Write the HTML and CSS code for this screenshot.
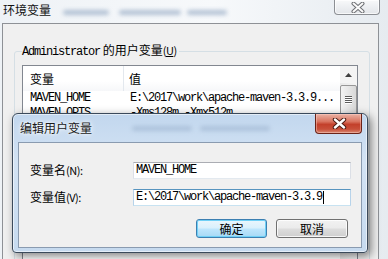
FILE: index.html
```html
<!DOCTYPE html>
<html lang="zh-CN">
<head>
<meta charset="utf-8">
<title>环境变量</title>
<link rel="stylesheet" href="styles.css">
</head>
<body>
<div class="win">
  <div class="titlebar">
    <span class="title">环境变量</span>
    <span class="ghost g1"></span>
    <span class="ghost g2"></span>
    <span class="ghost g3"></span>
    <div class="xgray">
      <svg width="14" height="11" viewBox="0 0 14 11"><path d="M2.5 1.5 L11.5 9.5 M11.5 1.5 L2.5 9.5" stroke="#6d6f73" stroke-width="4" stroke-linecap="round"/><path d="M2.5 1.5 L11.5 9.5 M11.5 1.5 L2.5 9.5" stroke="#fafafa" stroke-width="2" stroke-linecap="round"/></svg>
    </div>
  </div>
  <div class="frame">
    <fieldset class="group">
      <legend><span class="mono">Administrator</span> 的用户变量<span class="acc">(<u>U</u>)</span></legend>
      <div class="list">
        <div class="lv">
          <div class="hdr"><div class="hc">变量</div><div class="hc hc2">值</div></div>
          <div class="row"><div class="c1">MAVEN_HOME</div><div class="c2">E:\2017\work\apache-maven-3.3.9...</div></div>
          <div class="row"><div class="c1">MAVEN_OPTS</div><div class="c2">-Xms128m -Xmx512m</div></div>
        </div>
        <div class="sb">
          <div class="up"><svg width="7" height="4" viewBox="0 0 7 4"><path d="M0 4 L3.5 0 L7 4 Z" fill="#404040"/></svg></div>
          <div class="thumb"><span></span><span></span><span></span><span></span></div>
        </div>
      </div>
    </fieldset>
  </div>
</div>

<div class="dlg">
  <div class="dtitle">
    <span class="dt">编辑用户变量</span>
    <span class="ghost h1"></span>
    <span class="ghost h2"></span>
    <div class="xred">
      <svg width="15" height="11" viewBox="0 0 15 11"><path d="M3 1.5 L12 9.5 M12 1.5 L3 9.5" stroke="#4a1a12" stroke-width="4.4" stroke-linecap="round"/><path d="M3 1.5 L12 9.5 M12 1.5 L3 9.5" stroke="#ffffff" stroke-width="2.4" stroke-linecap="round"/></svg>
    </div>
  </div>
  <div class="dbody">
    <div class="field">
      <label class="lbl">变量名<span class="acc">(N):</span></label>
      <div class="inp"><span class="mono">MAVEN_HOME</span></div>
    </div>
    <div class="field">
      <label class="lbl">变量值<span class="acc">(V):</span></label>
      <div class="inp focus"><span class="mono">E:\2017\work\apache-maven-3.3.9</span><span class="caret"></span></div>
    </div>
    <div class="btns">
      <div class="btn def">确定</div>
      <div class="btn">取消</div>
    </div>
  </div>
</div>
</body>
</html>
```

FILE: styles.css
```css
* { box-sizing: border-box; }

body {
  margin: 0;
  width: 388px;
  height: 259px;
  overflow: hidden;
  position: relative;
  background: linear-gradient(90deg, #eef2f6 0%, #f7f9fb 55%, #e6ebf0 100%);
  font-family: "Noto Sans CJK SC", "DejaVu Sans", sans-serif;
  font-size: 12px;
  color: #000;
}

.mono {
  font-family: "Liberation Mono", "DejaVu Sans Mono", monospace;
  font-size: 12px;
  letter-spacing: -1.2px;
}

.acc {
  font-size: 11px;
  letter-spacing: -0.5px;
}

/* outer window */
.titlebar {
  height: 23px;
  display: flex;
  align-items: flex-start;
  padding: 0 8px 0 3px;
}

.title {
  line-height: 20px;
  font-size: 12px;
  color: #111;
}

.ghost {
  display: block;
  height: 5px;
  margin-top: 10px;
  background: #7d96b6;
  border-radius: 3px;
  filter: blur(2px);
  opacity: 0.55;
}

.g1 { width: 46px; margin-left: 12px; }
.g2 { width: 62px; margin-left: 10px; }
.g3 { width: 40px; margin-left: 6px; }

.xgray {
  margin-left: auto;
  width: 46px;
  height: 15px;
  border: 1px solid #8c8f94;
  border-top: none;
  border-radius: 0 0 4px 4px;
  background: linear-gradient(#f8f9fa, #e2e5e9);
  box-shadow: inset 0 0 0 1px rgba(255, 255, 255, 0.7);
  display: flex;
  align-items: center;
  justify-content: center;
  padding-left: 2px;
}

.frame {
  margin: 0 9px 0 2px;
  height: 240px;
  border: 1px solid #8e9196;
  background: #f0f0f0;
  padding: 0 8px 0 11px;
}

.group {
  margin: 19px 0 0;
  padding: 6px 11px 0 7px;
  border: 1px solid #d5dfe5;
  border-radius: 3px;
  height: 220px;
  min-width: 0;
}

.group legend {
  padding: 0 2px 0 0;
  line-height: 14px;
  font-size: 12px;
}

.list {
  border: 1px solid #828790;
  background: #fff;
  display: flex;
  height: 200px;
}

.lv { flex: 1; }

.hdr {
  display: grid;
  grid-template-columns: 101px 1fr;
  height: 25px;
  background: linear-gradient(#ffffff 60%, #f6f7f9);
}

.hc {
  padding-left: 7px;
  line-height: 25px;
  border-right: 1px solid #e3e8ee;
}

.hc2 {
  padding-left: 5px;
  border-right: none;
}

.row {
  display: grid;
  grid-template-columns: 101px 1fr;
  height: 15px;
  line-height: 15px;
  font-family: "Liberation Mono", "DejaVu Sans Mono", monospace;
  font-size: 12px;
  letter-spacing: -1.2px;
  white-space: nowrap;
}

.c1 { padding-left: 7px; }
.c2 { padding-left: 6px; overflow: hidden; }

.sb {
  width: 17px;
  background: linear-gradient(90deg, #e9e9e9, #f5f5f5);
  display: flex;
  flex-direction: column;
}

.sb .up {
  height: 17px;
  display: flex;
  align-items: center;
  justify-content: center;
  background: #f4f4f4;
}

.sb .thumb {
  margin: 2px 0 0;
  height: 70px;
  border: 1px solid #979797;
  border-radius: 2px;
  background: linear-gradient(90deg, #f3f3f3, #e6e6e6 50%, #d8d8d8);
  display: flex;
  flex-direction: column;
  align-items: center;
  padding-top: 10px;
  gap: 1px;
}

.sb .thumb span {
  width: 7px;
  height: 1px;
  background: #5c5c5c;
  box-shadow: 0 1px 0 #fff;
}

/* edit dialog (modal, over the window) */
.dlg {
  position: absolute;
  left: 12px;
  top: 113px;
  width: 356px;
  height: 140px;
  border: 1px solid #3b4a5b;
  border-radius: 6px 6px 4px 4px;
  background: linear-gradient(180deg, #c2d7ee 0%, #d3e3f4 35%, #c6daef 100%);
  box-shadow: 3px 3px 10px rgba(0, 0, 0, 0.5), inset 0 0 0 1px rgba(255, 255, 255, 0.55);
  display: flex;
  flex-direction: column;
  padding: 0 5px 4px;
}

.dtitle {
  height: 28px;
  display: flex;
  align-items: flex-start;
  padding-left: 2px;
}

.dt {
  line-height: 28px;
  font-size: 12px;
  color: #1a1a1a;
  text-shadow: 0 0 6px #fff, 0 0 3px #fff;
}

.h1 { width: 60px; margin-left: 40px; margin-top: 12px; opacity: 0.35; }
.h2 { width: 70px; margin-left: 8px; margin-top: 12px; opacity: 0.35; }

.xred {
  margin-left: auto;
  width: 47px;
  height: 20px;
  border: 1px solid #6b2318;
  border-top: none;
  border-radius: 0 0 4px 4px;
  background: linear-gradient(180deg, #eab3a6 0%, #d9735f 40%, #c3402b 55%, #c8503a 80%, #d98a74 100%);
  box-shadow: inset 0 0 0 1px rgba(255, 210, 200, 0.45);
  display: flex;
  align-items: center;
  justify-content: center;
  padding-left: 2px;
}

.dbody {
  flex: 1;
  border: 1px solid #8a9bb0;
  background: #f0f0f0;
  padding: 18px 10px 0 11px;
  display: flex;
  flex-direction: column;
}

.field {
  display: grid;
  grid-template-columns: 103px 218px;
  align-items: center;
  height: 17px;
  margin-bottom: 10px;
}

.lbl {
  font-size: 12px;
  line-height: 17px;
}

.inp {
  height: 17px;
  border: 1px solid #abadb3;
  border-left-color: #dbdfe6;
  border-right-color: #dbdfe6;
  border-bottom-color: #e3e9ef;
  background: #fff;
  padding-left: 2px;
  line-height: 15px;
  display: flex;
  align-items: center;
  white-space: nowrap;
}

.inp.focus {
  border-color: #5794bf;
  border-left-color: #b7d3ea;
  border-right-color: #b7d3ea;
  border-bottom-color: #c7e2f1;
}

.caret {
  width: 1px;
  height: 13px;
  background: #000;
  margin-left: 1px;
}

.btns {
  display: flex;
  justify-content: flex-end;
  gap: 9px;
  padding-right: 3px;
  margin-top: 4px;
}

.btn {
  width: 72px;
  height: 19px;
  border: 1px solid #707070;
  border-radius: 3px;
  background: linear-gradient(180deg, #f2f2f2 0%, #ebebeb 48%, #dddddd 52%, #cfcfcf 100%);
  box-shadow: inset 0 0 0 1px rgba(255, 255, 255, 0.8);
  text-align: center;
  line-height: 17px;
  font-size: 12px;
}

.btn.def {
  width: 71px;
  border-color: #3c7fb1;
  background: linear-gradient(180deg, #eaf6fd 0%, #d9f0fc 48%, #bee6fd 52%, #a7d9f5 100%);
  box-shadow: inset 0 0 0 1px #6fd0f6;
}
```
